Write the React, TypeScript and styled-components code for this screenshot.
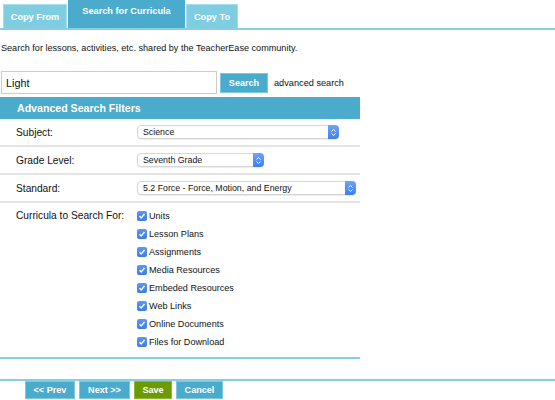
import React from 'react'
import styled, { createGlobalStyle } from 'styled-components'

const colors = {
  blue: '#4aabcc',
  lightBlue: '#7fcde1',
  line: '#86cfe2',
  green: '#6b9b00',
  text: '#111',
  rowLine: '#e4e4e4',
}

const GlobalStyle = createGlobalStyle`
  body {
    margin: 0;
    background: #fff;
    font-family: 'Liberation Sans', Arial, sans-serif;
    color: ${colors.text};
  }
`

const Page = styled.div`
  width: 555px;
  height: 400px;
  overflow: hidden;
`

const TabBar = styled.div`
  display: flex;
  align-items: flex-end;
  height: 28px;
  padding-left: 3px;
  border-bottom: 2px solid ${colors.line};
`

interface TabProps {
  active?: boolean
  w: number
}

const Tab = styled.div<TabProps>`
  box-sizing: border-box;
  width: ${(p) => p.w}px;
  height: ${(p) => (p.active ? '28px' : '24px')};
  margin-right: 1px;
  display: flex;
  justify-content: center;
  align-items: ${(p) => (p.active ? 'flex-start' : 'center')};
  padding-top: ${(p) => (p.active ? '6px' : '1px')};
  background: ${(p) => (p.active ? colors.blue : colors.lightBlue)};
  border: ${(p) => (p.active ? 'none' : '1px solid #a9dcea')};
  border-bottom: none;
  color: #fff;
  font-weight: bold;
  font-size: 9.2px;
`

const Intro = styled.p`
  margin: 12px 0 0 1px;
  font-size: 9.1px;
  line-height: 12px;
`

const SearchRow = styled.div`
  display: flex;
  align-items: center;
  margin-top: 17px;
  padding-left: 1px;
`

const SearchInput = styled.div`
  box-sizing: border-box;
  width: 216px;
  height: 23px;
  border: 1px solid #ccc;
  padding-left: 4px;
  display: flex;
  align-items: center;
  font-size: 10.8px;
`

const Button = styled.div<{ tone?: 'blue' | 'green' }>`
  box-sizing: border-box;
  height: 20px;
  display: flex;
  align-items: center;
  justify-content: center;
  background: ${(p) => (p.tone === 'green' ? colors.green : colors.blue)};
  border: 1px solid ${(p) => (p.tone === 'green' ? '#8fb63a' : '#7fc7de')};
  color: #fff;
  font-weight: bold;
  font-size: 9.1px;
`

const SearchButton = styled(Button)`
  width: 48px;
  margin-left: 3px;
`

const AdvancedLink = styled.span`
  margin-left: 6px;
  font-size: 9.2px;
`

const Filters = styled.div`
  width: 360px;
  margin-top: 3px;
  border-bottom: 2px solid ${colors.line};
`

const FiltersHeader = styled.div`
  height: 22px;
  background: ${colors.blue};
  color: #fff;
  font-weight: bold;
  font-size: 10.6px;
  padding-left: 17px;
  display: flex;
  align-items: center;
`

const FilterRow = styled.div<{ last?: boolean }>`
  display: flex;
  align-items: ${(p) => (p.last ? 'flex-start' : 'center')};
  height: ${(p) => (p.last ? 'auto' : '26px')};
  padding: ${(p) => (p.last ? '6px 0 9px' : '0')};
  border-bottom: ${(p) => (p.last ? 'none' : `2px solid ${colors.rowLine}`)};
`

const RowLabel = styled.div`
  width: 121px;
  padding-left: 16px;
  font-size: 10.2px;
  line-height: 13px;
  flex-shrink: 0;
  white-space: nowrap;
`

const SelectBox = styled.div`
  box-sizing: border-box;
  height: 14px;
  border: 1px solid #d6d6d6;
  border-radius: 4px;
  background: #fff;
  display: flex;
  align-items: center;
  justify-content: space-between;
  padding-left: 5px;
  font-size: 8.8px;
  box-shadow: 0 1px 1px rgba(0, 0, 0, 0.08);
`

const Stepper = styled.div`
  width: 11px;
  height: 14px;
  margin-right: -1px;
  border-radius: 0 4px 4px 0;
  background: linear-gradient(#6ea4fb, #3f7ef0);
  display: flex;
  align-items: center;
  justify-content: center;
`

const CheckList = styled.div`
  display: flex;
  flex-direction: column;
  gap: 5px;
`

const CheckItem = styled.div`
  display: flex;
  align-items: center;
  height: 13px;
  font-size: 9.1px;
`

const Box = styled.span`
  width: 10px;
  height: 10px;
  border-radius: 2px;
  background: linear-gradient(#5d97f6, #3d7bea);
  display: inline-flex;
  align-items: center;
  justify-content: center;
  margin-right: 2px;
`

const Footer = styled.div`
  margin-top: 20px;
  border-top: 2px solid ${colors.line};
  display: flex;
  padding-left: 25px;
  gap: 4px;
`

const NavButton = styled(Button)<{ w: number }>`
  width: ${(p) => p.w}px;
  height: 18px;
`

const Select: React.FC<{ value: string; width: number }> = ({ value, width }) => (
  <SelectBox style={{ width }}>
    <span>{value}</span>
    <Stepper>
      <svg width="7" height="9" viewBox="0 0 7 9">
        <path d="M1.5 3.5 L3.5 1.5 L5.5 3.5 M1.5 5.5 L3.5 7.5 L5.5 5.5" fill="none" stroke="#fff" strokeWidth="1" />
      </svg>
    </Stepper>
  </SelectBox>
)

const curricula = [
  'Units',
  'Lesson Plans',
  'Assignments',
  'Media Resources',
  'Embeded Resources',
  'Web Links',
  'Online Documents',
  'Files for Download',
]

const App: React.FC = () => (
  <Page>
    <GlobalStyle />
    <TabBar>
      <Tab w={64}>Copy From</Tab>
      <Tab w={117} active>Search for Curricula</Tab>
      <Tab w={52}>Copy To</Tab>
    </TabBar>
    <Intro>Search for lessons, activities, etc. shared by the TeacherEase community.</Intro>
    <SearchRow>
      <SearchInput>Light</SearchInput>
      <SearchButton>Search</SearchButton>
      <AdvancedLink>advanced search</AdvancedLink>
    </SearchRow>
    <Filters>
      <FiltersHeader>Advanced Search Filters</FiltersHeader>
      <FilterRow>
        <RowLabel>Subject:</RowLabel>
        <Select value="Science" width={202} />
      </FilterRow>
      <FilterRow>
        <RowLabel>Grade Level:</RowLabel>
        <Select value="Seventh Grade" width={127} />
      </FilterRow>
      <FilterRow>
        <RowLabel>Standard:</RowLabel>
        <Select value="5.2 Force - Force, Motion, and Energy" width={219} />
      </FilterRow>
      <FilterRow last>
        <RowLabel>Curricula to Search For:</RowLabel>
        <CheckList>
          {curricula.map((c) => (
            <CheckItem key={c}>
              <Box>
                <svg width="8" height="8" viewBox="0 0 8 8">
                  <path d="M1.5 4.2 L3.2 6 L6.5 2" fill="none" stroke="#fff" strokeWidth="1.4" />
                </svg>
              </Box>
              {c}
            </CheckItem>
          ))}
        </CheckList>
      </FilterRow>
    </Filters>
    <Footer>
      <NavButton w={50}>&lt;&lt; Prev</NavButton>
      <NavButton w={51}>Next &gt;&gt;</NavButton>
      <NavButton w={38} tone="green">Save</NavButton>
      <NavButton w={47}>Cancel</NavButton>
    </Footer>
  </Page>
)

export default App
